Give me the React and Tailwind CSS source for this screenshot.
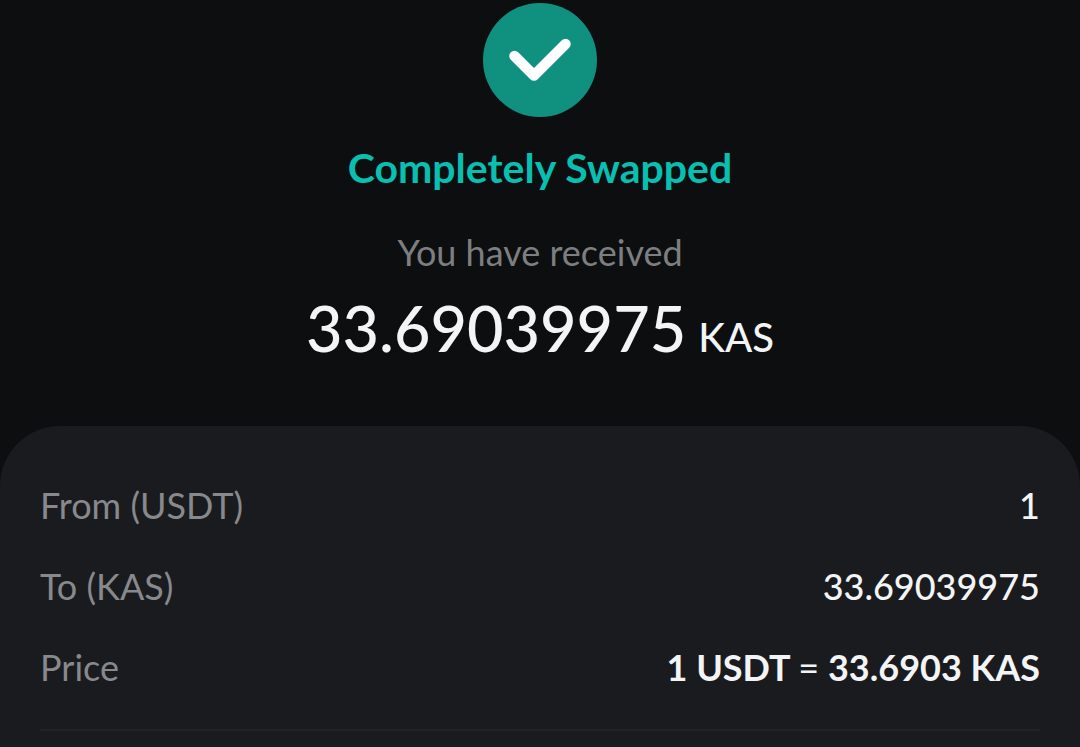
function Row({ label, children }) {
  return (
    <div className="flex h-11 items-center justify-between text-[36px] leading-[44px]">
      <span className="text-[#88898c]">{label}</span>
      {children}
    </div>
  );
}

export default function App() {
  return (
    <main className="flex h-[747px] w-full flex-col overflow-hidden bg-[#0d0e10] font-[Lato,sans-serif] whitespace-nowrap">
      <section className="flex h-[426px] shrink-0 flex-col items-center pt-[3px]">
        <svg className="size-[114px] shrink-0" viewBox="0 0 114 114" fill="none">
          <circle cx="57" cy="57" r="57" fill="#109180" />
          <path d="M31.5 53 L51 72.5 L82.5 41" stroke="#fff" strokeWidth="10.5" strokeLinecap="round" strokeLinejoin="round" />
        </svg>
        <h1 className="mt-[26px] text-[41px] leading-[50px] font-bold text-[#08bfb0]">Completely Swapped</h1>
        <p className="mt-[37px] text-[36px] leading-[44px] text-[#7d7e80]">You have received</p>
        <div className="mt-4 flex items-baseline gap-3 leading-[76px] text-[#f3f4f6]">
          <span className="text-[63px] font-medium">33.69039975</span>
          <span className="text-[40px] font-medium">KAS</span>
        </div>
      </section>
      <section className="flex flex-1 flex-col gap-[37px] rounded-t-[60px] bg-[#1a1b1f] px-10 pt-[57px]">
        <Row label="From (USDT)">
          <span className="font-medium text-[#f3f4f6]">1</span>
        </Row>
        <Row label="To (KAS)">
          <span className="font-medium text-[#f3f4f6]">33.69039975</span>
        </Row>
        <Row label="Price">
          <span className="font-bold text-[#f3f4f6]">
            1 USDT <span className="font-normal">=</span> 33.6903 KAS
          </span>
        </Row>
        <hr className="mt-[3px] border-t-2 border-[#222327]" />
      </section>
    </main>
  );
}
